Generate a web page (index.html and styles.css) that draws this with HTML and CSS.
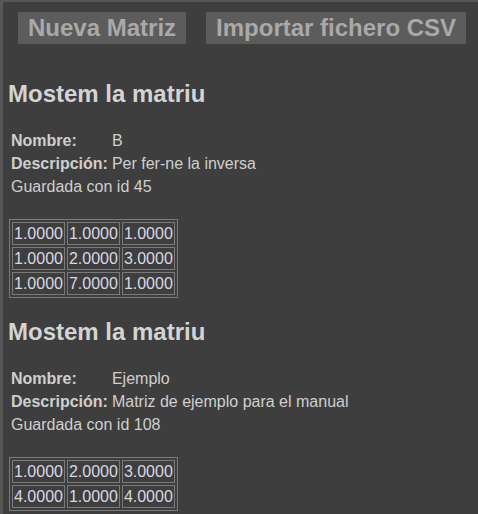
FILE: index.html
```html
<!DOCTYPE html>
<html>
<head>
<meta charset="utf-8">
<link rel="stylesheet" href="styles.css">
</head>
<body>
<div class="page">
  <nav class="toolbar">
    <span class="btn">Nueva Matriz</span>
    <span class="btn">Importar fichero CSV</span>
  </nav>

  <section class="matrix">
    <h2>Mostem la matriu</h2>
    <table class="info">
      <tr><th>Nombre:</th><td>B</td></tr>
      <tr><th>Descripción:</th><td>Per fer-ne la inversa</td></tr>
      <tr><td colspan="2">Guardada con id 45</td></tr>
    </table>
    <table class="grid">
      <tr><td>1.0000</td><td>1.0000</td><td>1.0000</td></tr>
      <tr><td>1.0000</td><td>2.0000</td><td>3.0000</td></tr>
      <tr><td>1.0000</td><td>7.0000</td><td>1.0000</td></tr>
    </table>
  </section>

  <section class="matrix">
    <h2>Mostem la matriu</h2>
    <table class="info">
      <tr><th>Nombre:</th><td>Ejemplo</td></tr>
      <tr><th>Descripción:</th><td>Matriz de ejemplo para el manual</td></tr>
      <tr><td colspan="2">Guardada con id 108</td></tr>
    </table>
    <table class="grid">
      <tr><td>1.0000</td><td>2.0000</td><td>3.0000</td></tr>
      <tr><td>4.0000</td><td>1.0000</td><td>4.0000</td></tr>
    </table>
  </section>
</div>
</body>
</html>
```

FILE: styles.css
```css
html, body {
  margin: 0;
  padding: 0;
  background: #3e3e3e;
}
body {
  font-family: "Liberation Sans", Arial, sans-serif;
  font-size: 16px;
  color: #cfcfcf;
}
.page {
  border-left: 3px solid #575757;
  border-top: 2px solid #575757;
  min-height: 512px;
  padding: 0 5px;
}
.toolbar {
  display: flex;
  gap: 20px;
  padding: 10px 0 0 10px;
}
.btn {
  background: #5c5c5c;
  color: #a9a9a9;
  font-weight: bold;
  font-size: 24px;
  line-height: 32px;
  padding: 0 10px;
}
h2 {
  font-size: 24px;
  font-weight: bold;
  margin: 36px 0 20px 0;
  line-height: 28px;
  color: #d4d4d4;
}
.matrix + .matrix h2 {
  margin-top: 20px;
}
table.info {
  border-spacing: 2px;
  border-collapse: separate;
  margin-bottom: 20px;
}
table.info th,
table.info td {
  padding: 1px;
  text-align: left;
  line-height: 19px;
  vertical-align: top;
}
table.info th {
  font-weight: bold;
  padding-right: 1px;
}
table.grid {
  border: 1px solid #7a7a7a;
  border-spacing: 2px;
  border-collapse: separate;
  margin-left: 1px;
}
table.grid td {
  border: 1px solid #7a7a7a;
  padding: 1px 1px;
  line-height: 19px;
  color: #d8d8e4;
}
```
